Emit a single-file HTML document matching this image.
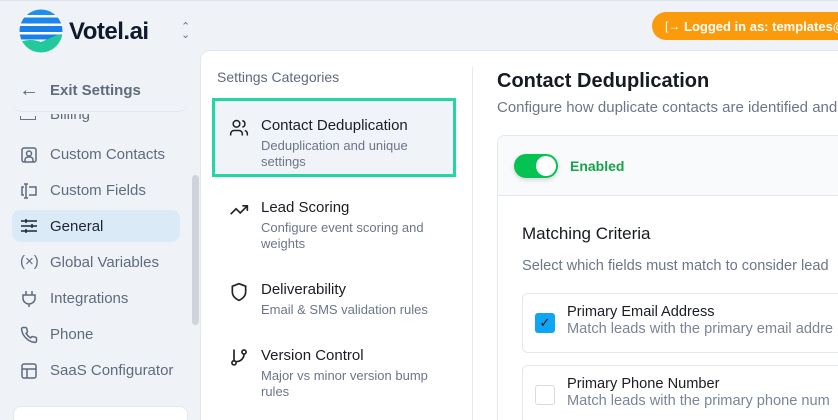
<!DOCTYPE html>
<html><head><meta charset="utf-8"><style>
*{box-sizing:border-box;margin:0;padding:0}
html,body{width:838px;height:420px;overflow:hidden}
body{background:#eff3f8;font-family:"Liberation Sans",sans-serif;position:relative}
.a{position:absolute;white-space:nowrap}
.nav{color:#5f6b7d;font-size:15px}
.ic{position:absolute;left:20px;width:18px;height:18px}
.cat-t{font-size:15px;color:#1a1d24}
.cat-s{font-size:13px;color:#6b7689}
</style></head><body>
<div class="a" style="left:0;top:0;width:838px;height:1px;background:#dde3ea"></div>
<!-- logo -->
<svg class="a" style="left:19px;top:8px" width="44" height="46" viewBox="0 0 44 46">
<defs><clipPath id="c"><circle cx="22" cy="23" r="21.5"/></clipPath></defs>
<g clip-path="url(#c)">
<rect x="0" y="0" width="44" height="46" fill="#fff"/>
<rect x="0" y="0" width="44" height="7" fill="#1e8ef0"/>
<rect x="0" y="9.5" width="44" height="6" fill="#1a86ee"/>
<rect x="0" y="18" width="44" height="6" fill="#1a7fe8"/>
<rect x="0" y="26.5" width="44" height="5" fill="#1a7fe8"/>
<path d="M0 34 Q12 30 22 34 L38 27 Q44 26 44 30 L44 46 L0 46Z" fill="#22c99b"/>
</g></svg>
<div class="a" style="left:69px;top:18px;font-size:24px;font-weight:bold;color:#111a2c;letter-spacing:-0.5px">Votel.ai</div>
<div class="a" style="left:181px;top:23px;font-size:11px;color:#6b7280;line-height:8px">⌃<br>⌄</div>
<!-- logged pill -->
<div class="a" style="left:652px;top:12px;width:200px;height:28px;border-radius:14px;background:#fb9a0a;color:#fff;font-size:13px;font-weight:bold;padding:7px 0 0 32px">Logged in as: templates@v</div>
<div class="a" style="left:665px;top:19px;color:#fff;font-size:12px">[→</div>
<!-- sidebar -->
<div class="a" style="left:12px;top:66px;width:176px;height:46px;border-radius:0 0 10px 10px;border-bottom:1px solid #e2e7ee"></div>
<div class="a nav" style="left:19px;top:79px;font-size:20px">←</div>
<div class="a nav" style="left:50px;top:82px;font-weight:bold">Exit Settings</div>
<div class="a" style="left:50px;top:114px;height:8px;overflow:hidden;width:100px"><div class="nav" style="position:relative;top:-8px">Billing</div></div>
<div class="a" style="left:20px;top:116px;width:16px;height:4px;border:1.5px solid #6b7280;border-top:none"></div>
<svg class="ic" style="top:146px" viewBox="0 0 18 18" fill="none" stroke="#5f6b7d" stroke-width="1.5"><rect x="2" y="2" width="14" height="14" rx="2"/><circle cx="9" cy="7.5" r="2.5"/><path d="M5 16v-2a3 3 0 0 1 3-3h2a3 3 0 0 1 3 3v2"/></svg>
<div class="a nav" style="left:50px;top:146px">Custom Contacts</div>
<svg class="ic" style="top:182px" viewBox="0 0 18 18" fill="none" stroke="#5f6b7d" stroke-width="1.5"><path d="M4 5H2v8h2M9 5h7v8H9M6 2v14M4 2h4M4 16h4"/></svg>
<div class="a nav" style="left:50px;top:182px">Custom Fields</div>
<div class="a" style="left:12px;top:210px;width:168px;height:32px;border-radius:8px;background:#dbeaf7"></div>
<svg class="ic" style="top:217px" viewBox="0 0 18 18" fill="none" stroke="#1f2937" stroke-width="1.5"><path d="M1 4h16M1 9h16M1 14h16M6 2v4M12 7v4M6 12v4"/></svg>
<div class="a nav" style="left:50px;top:218px;color:#1f2533">General</div>
<div class="a nav" style="left:20px;top:253px;font-size:15px">(×)</div>
<div class="a nav" style="left:50px;top:254px">Global Variables</div>
<svg class="ic" style="top:290px" viewBox="0 0 18 18" fill="none" stroke="#5f6b7d" stroke-width="1.5"><path d="M6 1v4M12 1v4M3 5h12v4a6 6 0 0 1-6 5 6 6 0 0 1-6-5zM9 14v3"/></svg>
<div class="a nav" style="left:50px;top:290px">Integrations</div>
<svg class="ic" style="top:326px" viewBox="0 0 24 24" fill="none" stroke="#5f6b7d" stroke-width="2"><path d="M22 16.9v3a2 2 0 0 1-2.2 2 19.8 19.8 0 0 1-8.6-3.1 19.5 19.5 0 0 1-6-6A19.8 19.8 0 0 1 2.1 4.2 2 2 0 0 1 4.1 2h3a2 2 0 0 1 2 1.7c.1 1 .4 1.9.7 2.8a2 2 0 0 1-.4 2.1L8.1 9.9a16 16 0 0 0 6 6l1.3-1.3a2 2 0 0 1 2.1-.4c.9.3 1.8.6 2.8.7a2 2 0 0 1 1.7 2z"/></svg>
<div class="a nav" style="left:50px;top:326px">Phone</div>
<svg class="ic" style="top:362px" viewBox="0 0 18 18" fill="none" stroke="#5f6b7d" stroke-width="1.5"><rect x="2" y="2" width="14" height="14" rx="2"/><path d="M2 7h14M7 7v9"/></svg>
<div class="a nav" style="left:50px;top:362px">SaaS Configurator</div>
<div class="a" style="left:192px;top:175px;width:7px;height:150px;border-radius:4px;background:#cfd3da"></div>
<div class="a" style="left:13px;top:406px;width:175px;height:20px;border-radius:8px;background:#fff;border:1px solid #e2e7ee"></div>
<!-- main panel -->
<div class="a" style="left:200px;top:50px;width:660px;height:380px;background:#fff;border:1px solid #e3e8ef;border-radius:10px 0 0 0"></div>
<div class="a" style="left:472px;top:67px;width:1px;height:360px;background:#e5e9ef"></div>
<div class="a" style="left:217px;top:69px;font-size:14px;color:#5f6b7d">Settings Categories</div>
<div class="a" style="left:212px;top:98px;width:244px;height:79px;border:3px solid #22d6a5;background:#f0f3f8"></div>
<svg class="a" style="left:229px;top:118px" width="20" height="20" viewBox="0 0 24 24" fill="none" stroke="#222" stroke-width="1.8"><circle cx="9" cy="7" r="4"/><path d="M2 21v-2a4 4 0 0 1 4-4h6a4 4 0 0 1 4 4v2M16 3.1a4 4 0 0 1 0 7.8M22 21v-2a4 4 0 0 0-3-3.9"/></svg>
<div class="a cat-t" style="left:261px;top:117px">Contact Deduplication</div>
<div class="a cat-s" style="left:261px;top:138px">Deduplication and unique</div>
<div class="a cat-s" style="left:261px;top:154px">settings</div>
<svg class="a" style="left:229px;top:200px" width="20" height="20" viewBox="0 0 24 24" fill="none" stroke="#222" stroke-width="2"><path d="M22 7l-8.5 8.5-5-5L2 17M16 7h6v6"/></svg>
<div class="a cat-t" style="left:261px;top:199px">Lead Scoring</div>
<div class="a cat-s" style="left:261px;top:220px">Configure event scoring and</div>
<div class="a cat-s" style="left:261px;top:236px">weights</div>
<svg class="a" style="left:229px;top:282px" width="20" height="20" viewBox="0 0 24 24" fill="none" stroke="#222" stroke-width="2"><path d="M12 22s8-3 8-10V5l-8-3-8 3v7c0 7 8 10 8 10z"/></svg>
<div class="a cat-t" style="left:261px;top:281px">Deliverability</div>
<div class="a cat-s" style="left:261px;top:302px">Email &amp; SMS validation rules</div>
<svg class="a" style="left:229px;top:347px" width="20" height="20" viewBox="0 0 24 24" fill="none" stroke="#222" stroke-width="2"><circle cx="6" cy="19" r="2.5"/><circle cx="18" cy="6" r="2.5"/><path d="M6 3v13.5M18 8.5a9 9 0 0 1-9 9"/></svg>
<div class="a cat-t" style="left:261px;top:347px">Version Control</div>
<div class="a cat-s" style="left:261px;top:368px">Major vs minor version bump</div>
<div class="a cat-s" style="left:261px;top:384px">rules</div>
<!-- content -->
<div class="a" style="left:497px;top:70px;font-size:20px;font-weight:bold;color:#161a22">Contact Deduplication</div>
<div class="a" style="left:497px;top:99px;font-size:15px;color:#6b7689">Configure how duplicate contacts are identified and</div>
<div class="a" style="left:497px;top:135px;width:360px;height:300px;border:1px solid #e3e8ef;border-radius:8px;background:#fff"></div>
<div class="a" style="left:498px;top:136px;width:359px;height:60px;border-bottom:1px solid #e3e8ef;border-radius:8px 0 0 0;background:#f8fafc"></div>
<div class="a" style="left:514px;top:154px;width:44px;height:24px;border-radius:12px;background:#04c353;box-shadow:0 2px 5px rgba(0,0,0,.15)"></div>
<div class="a" style="left:536px;top:156px;width:20px;height:20px;border-radius:10px;background:#fff"></div>
<div class="a" style="left:570px;top:158px;font-size:14px;font-weight:bold;color:#16a34a">Enabled</div>
<div class="a" style="left:522px;top:224px;font-size:17px;color:#161a22">Matching Criteria</div>
<div class="a" style="left:522px;top:258px;font-size:14.6px;color:#6b7689">Select which fields must match to consider lead</div>
<div class="a" style="left:522px;top:293px;width:330px;height:60px;border:1px solid #e3e8ef;border-radius:6px"></div>
<div class="a" style="left:535px;top:313px;width:20px;height:20px;border-radius:3px;background:#0ea5f5;color:#111;font-size:13px;text-align:center;line-height:20px">✓</div>
<div class="a" style="left:567px;top:304px;font-size:14.6px;color:#1a1d24">Primary Email Address</div>
<div class="a" style="left:567px;top:321px;font-size:14.6px;color:#7b8596">Match leads with the primary email addre</div>
<div class="a" style="left:522px;top:365px;width:330px;height:60px;border:1px solid #e3e8ef;border-radius:6px"></div>
<div class="a" style="left:535px;top:385px;width:20px;height:20px;border-radius:3px;border:1.5px solid #d6dbe3"></div>
<div class="a" style="left:567px;top:376px;font-size:14.6px;color:#1a1d24">Primary Phone Number</div>
<div class="a" style="left:567px;top:393px;font-size:14.6px;color:#7b8596">Match leads with the primary phone num</div>
</body></html>
